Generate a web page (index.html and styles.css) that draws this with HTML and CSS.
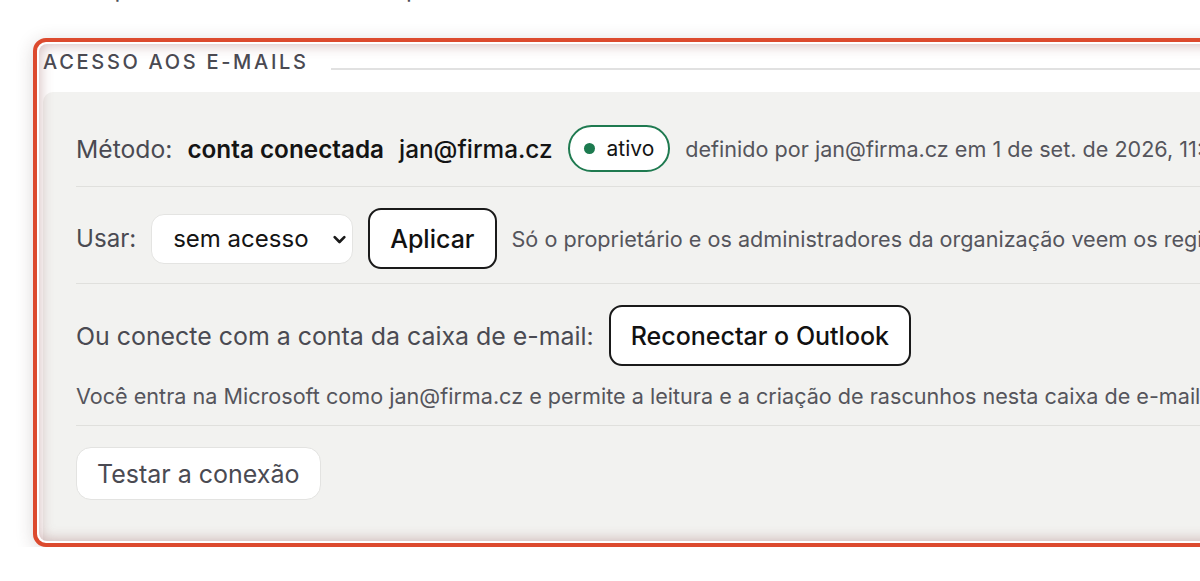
FILE: index.html
```html
<!DOCTYPE html>
<html lang="pt-BR">
<head>
<meta charset="utf-8">
<title>Acesso aos e-mails</title>
<link rel="stylesheet" href="styles.css">
</head>
<body>
<p class="intro">O aplicativo usa este acesso para ler e criar rascunhos.</p>
<section class="highlight">
  <div class="section">
    <h2 class="section-title"><span>ACESSO AOS E-MAILS</span></h2>
    <div class="card">
      <div class="row row-method">
        <span class="label">Método:</span>
        <strong class="value-strong">conta conectada</strong>
        <span class="value">jan@firma.cz</span>
        <span class="pill"><span class="dot"></span>ativo</span>
        <span class="meta">definido por jan@firma.cz em 1 de set. de 2026, 11:42</span>
      </div>
      <div class="row row-use">
        <label class="label" for="use">Usar:</label>
        <span class="select-wrap">
          <select id="use" class="select"><option>sem acesso</option><option>conta conectada</option></select>
          <svg class="chevron" width="15" height="15" viewBox="0 0 14 14" aria-hidden="true"><path d="M2.5 4.8 7 9.3l4.5-4.5" fill="none" stroke="#1a1a1a" stroke-width="2.5" stroke-linecap="round" stroke-linejoin="round"/></svg>
        </span>
        <button class="btn btn-strong">Aplicar</button>
        <span class="meta">Só o proprietário e os administradores da organização veem os registros de acesso.</span>
      </div>
      <div class="row row-stack">
        <div class="line">
          <span class="label">Ou conecte com a conta da caixa de e-mail:</span>
          <button class="btn btn-strong">Reconectar o Outlook</button>
        </div>
        <p class="note">Você entra na Microsoft como jan@firma.cz e permite a leitura e a criação de rascunhos nesta caixa de e-mail.</p>
      </div>
      <div class="row row-last">
        <button class="btn btn-soft">Testar a conexão</button>
      </div>
    </div>
  </div>
</section>
</body>
</html>
```
FILE: styles.css
```css
html, body {
  margin: 0;
  padding: 0;
  background: #ffffff;
  overflow: hidden;
  font-family: Inter, "Noto Sans", "Liberation Sans", sans-serif;
  color: #1a1a1a;
}

.intro {
  margin: -24px 0 0 76px;
  font-size: 24px;
  line-height: 26px;
  color: #4d4d55;
  white-space: nowrap;
}

.highlight {
  position: relative;
  box-sizing: border-box;
  width: 1400px;
  margin: 36px 0 0 33px;
  border: 4px solid #dc4a2e;
  border-radius: 13px;
  padding: 2px;
  background: #ffffff;
  box-shadow: 0 3px 18px rgba(60, 40, 40, 0.18);
}

.highlight::after {
  content: "";
  position: absolute;
  inset: 2px;
  border-radius: 8px;
  box-shadow: inset 0 0 13px 1px rgba(150, 90, 90, 0.42);
  pointer-events: none;
}

.section {
  padding: 6px 0 0 4px;
  border-radius: 8px;
  overflow: hidden;
}

.section-title {
  display: flex;
  align-items: flex-end;
  gap: 22px;
  margin: 0;
  font-size: 20px;
  line-height: 24px;
  font-weight: 500;
  letter-spacing: 2.7px;
  color: #4a4a52;
}

.section-title::after {
  content: "";
  flex: 1;
  height: 2px;
  margin-bottom: 4px;
  background: #e1e1e1;
}

.card {
  margin-top: 18px;
  background: #f2f2f0;
  padding: 12px 0 27px 33px;
  border-top-left-radius: 10px;
}

.row {
  display: flex;
  align-items: center;
  gap: 15px;
  padding: 21px 0 14px;
  border-bottom: 1px solid #e0e0dd;
  white-space: nowrap;
  font-size: 24.9px;
}

.row-method {
  font-size: 24.3px;
}

.row-last {
  border-bottom: none;
}

.row-stack {
  flex-direction: column;
  align-items: flex-start;
  gap: 15px;
}

.line {
  display: flex;
  align-items: center;
  gap: 15px;
}

.label {
  color: #4a4a52;
  font-size: 24.9px;
}

.row-method .label {
  font-size: 24.7px;
}

.row-use .label {
  font-size: 24.1px;
}

.value-strong {
  font-weight: 600;
  color: #141414;
}

.value {
  font-weight: 500;
  color: #141414;
}

.pill {
  display: inline-flex;
  align-items: center;
  gap: 12px;
  box-sizing: border-box;
  height: 47px;
  padding: 0 14px;
  border: 2px solid #1f7a50;
  border-radius: 24px;
  background: #ffffff;
  font-size: 21px;
  color: #141414;
}

.dot {
  width: 11px;
  height: 11px;
  border-radius: 50%;
  background: #1c7a4f;
}

.meta {
  font-size: 21.6px;
  color: #55555c;
}

.note {
  margin: 0;
  font-size: 21.6px;
  line-height: 30px;
  color: #55555c;
}

.select-wrap {
  position: relative;
  display: inline-block;
}

.select {
  display: block;
  appearance: none;
  -webkit-appearance: none;
  box-sizing: border-box;
  width: 202px;
  height: 50px;
  padding: 0 40px 0 21px;
  border: 1px solid #e4e4e2;
  border-radius: 13px;
  background: #ffffff;
  font-family: inherit;
  font-size: 24px;
  color: #141414;
}

.chevron {
  position: absolute;
  top: 18px;
  right: 6px;
}

.btn {
  box-sizing: border-box;
  font-family: inherit;
  font-size: 25px;
  cursor: pointer;
}

.btn-strong {
  height: 61px;
  padding: 0 20px;
  border: 2px solid #1a1a1a;
  border-radius: 13px;
  background: #ffffff;
  font-weight: 500;
  color: #111111;
}

.btn-soft {
  height: 53px;
  padding: 0 20px;
  border: 1px solid #e3e3e1;
  border-radius: 15px;
  background: #ffffff;
  font-weight: 400;
  color: #4a4a52;
}
```
